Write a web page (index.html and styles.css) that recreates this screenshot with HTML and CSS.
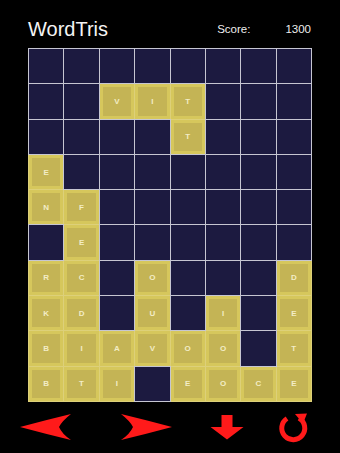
FILE: index.html
```html
<!DOCTYPE html>
<html>
<head>
<meta charset="utf-8">
<link rel="stylesheet" href="styles.css">
</head>
<body>
<div class="app">
  <div class="header">
    <div class="title">WordTris</div>
    <div class="score"><span>Score:</span><span class="points">1300</span></div>
  </div>
  <div class="board">
    <div class="c"></div><div class="c"></div><div class="c"></div><div class="c"></div><div class="c"></div><div class="c"></div><div class="c"></div><div class="c"></div>
    <div class="c"></div><div class="c"></div><div class="c g">V</div><div class="c g">I</div><div class="c g">T</div><div class="c"></div><div class="c"></div><div class="c"></div>
    <div class="c"></div><div class="c"></div><div class="c"></div><div class="c"></div><div class="c g">T</div><div class="c"></div><div class="c"></div><div class="c"></div>
    <div class="c g">E</div><div class="c"></div><div class="c"></div><div class="c"></div><div class="c"></div><div class="c"></div><div class="c"></div><div class="c"></div>
    <div class="c g">N</div><div class="c g">F</div><div class="c"></div><div class="c"></div><div class="c"></div><div class="c"></div><div class="c"></div><div class="c"></div>
    <div class="c"></div><div class="c g">E</div><div class="c"></div><div class="c"></div><div class="c"></div><div class="c"></div><div class="c"></div><div class="c"></div>
    <div class="c g">R</div><div class="c g">C</div><div class="c"></div><div class="c g">O</div><div class="c"></div><div class="c"></div><div class="c"></div><div class="c g">D</div>
    <div class="c g">K</div><div class="c g">D</div><div class="c"></div><div class="c g">U</div><div class="c"></div><div class="c g">I</div><div class="c"></div><div class="c g">E</div>
    <div class="c g">B</div><div class="c g">I</div><div class="c g">A</div><div class="c g">V</div><div class="c g">O</div><div class="c g">O</div><div class="c"></div><div class="c g">T</div>
    <div class="c g">B</div><div class="c g">T</div><div class="c g">I</div><div class="c"></div><div class="c g">E</div><div class="c g">O</div><div class="c g">C</div><div class="c g">E</div>
  </div>
  <div class="controls">
    <svg class="btn left" width="52" height="27" viewBox="0 0 52 27">
      <path d="M0 13 Q26 6 51 0 Q42 7 39 13 Q42 20 51 26 Q26 20 0 13 Z" fill="#ff1a1a"/>
    </svg>
    <svg class="btn right" width="52" height="27" viewBox="0 0 52 27">
      <path d="M52 13 Q26 6 1 0 Q10 7 13 13 Q10 20 1 26 Q26 20 52 13 Z" fill="#ff1a1a"/>
    </svg>
    <svg class="btn down" width="34" height="25" viewBox="0 0 34 25">
      <path d="M11.5 0 H22.5 V12 H33.5 L17 24.5 L0.5 12 H11.5 Z" fill="#ff1a1a"/>
    </svg>
    <svg class="btn refresh" width="35" height="30" viewBox="0 0 35 30">
      <path d="M11 5.5 A11.5 11.5 0 1 0 23 5.2" fill="none" stroke="#ff1a1a" stroke-width="5"/>
      <path d="M19 1 L31 0.5 L27 10.5 Z" fill="#ff1a1a"/>
    </svg>
  </div>
</div>
</body>
</html>
```
FILE: styles.css
```css
html, body {
  margin: 0;
  padding: 0;
  background: #000;
}
.app {
  width: 340px;
  height: 453px;
  background: #000;
  font-family: "Liberation Sans", Arial, sans-serif;
  color: #fff;
}
.header {
  height: 48px;
  box-sizing: border-box;
  padding: 19px 29px 0 28px;
  display: flex;
  justify-content: space-between;
  align-items: flex-start;
}
.title {
  font-size: 20px;
  line-height: 20px;
  color: #f4f4f4;
}
.score {
  margin-top: 4px;
  font-size: 11.5px;
  line-height: 12px;
  color: #eeeeee;
  display: flex;
}
.points {
  margin-left: 35px;
}
.board {
  margin-left: 28px;
  width: 284px;
  height: 354px;
  box-sizing: border-box;
  padding: 1px;
  display: grid;
  grid-template-columns: repeat(8, 1fr);
  grid-template-rows: repeat(10, 1fr);
  gap: 1px;
  background: #c6c6d2;
}
.c {
  background: #1c1a40;
  box-shadow: 0 0 0 1px #c6c6d2;
  z-index: 1;
  display: flex;
  align-items: center;
  justify-content: center;
  font-size: 8px;
  font-weight: bold;
  color: #f3edc6;
}
.g {
  z-index: 0;
  background: #c4b455;
  box-shadow: 0 0 0 1px #ddd07a, inset 0 0 0 3px #d6c75c;
}
.controls {
  display: flex;
  align-items: center;
  height: 51px;
  padding-left: 20px;
}
.btn {
  display: block;
}
.right {
  margin-left: 48px;
}
.down {
  margin-left: 38px;
}
.refresh {
  margin-left: 32px;
}
```
